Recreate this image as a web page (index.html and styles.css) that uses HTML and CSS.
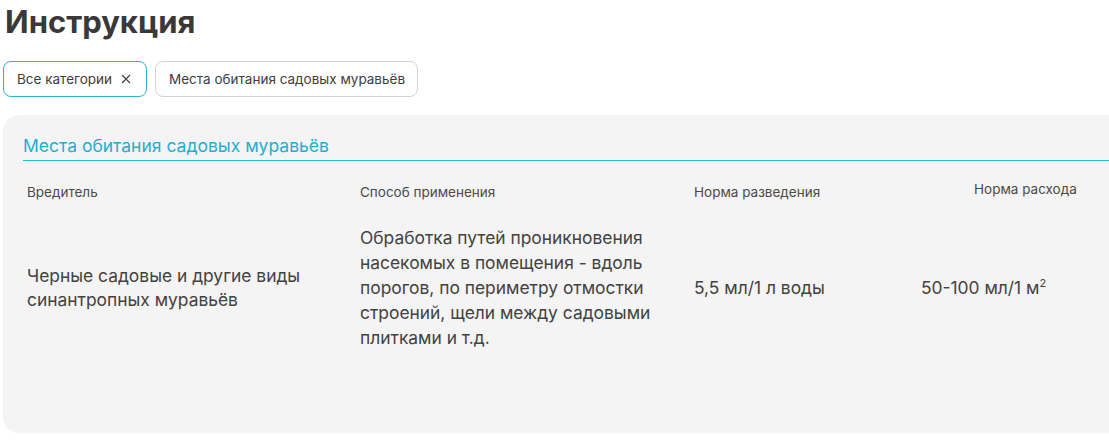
FILE: index.html
```html
<!DOCTYPE html>
<html lang="ru">
<head>
<meta charset="utf-8">
<link rel="stylesheet" href="styles.css">
</head>
<body>
<div class="page">
  <h1 class="title">Инструкция</h1>
  <div class="chips">
    <button class="chip chip-active">Все категории <svg class="x" width="10" height="10" viewBox="0 0 10 10"><path d="M1 1L9 9M9 1L1 9" stroke="#444" stroke-width="1.2" fill="none"/></svg></button>
    <button class="chip">Места обитания садовых муравьёв</button>
  </div>
  <section class="panel">
    <h2 class="panel-title">Места обитания садовых муравьёв</h2>
    <div class="table">
      <div class="th">Вредитель</div>
      <div class="th">Способ применения</div>
      <div class="th">Норма разведения</div>
      <div class="th th-last">Норма расхода</div>
      <div class="td">Черные садовые и другие виды синантропных муравьёв</div>
      <div class="td td-method">Обработка путей проникновения насекомых в помещения - вдоль порогов, по периметру отмостки строений, щели между садовыми плитками и т.д.</div>
      <div class="td">5,5 мл/1 л воды</div>
      <div class="td">50-100 мл/1 м<sup>2</sup></div>
    </div>
  </section>
</div>
</body>
</html>
```

FILE: styles.css
```css
html, body {
  margin: 0;
  padding: 0;
  background: #fff;
  overflow: hidden;
}
body {
  font-family: Inter, "Noto Sans", sans-serif;
  color: #3d3d3d;
}
.page {
  padding: 0 0 0 3px;
  width: 1130px;
}
.title {
  margin: 0;
  padding: 3px 0 0 2px;
  font-size: 31px;
  line-height: 38px;
  font-weight: 700;
  color: #3a3838;
  letter-spacing: 0;
}
.chips {
  display: flex;
  gap: 8px;
  margin-top: 20px;
}
.chip {
  display: flex;
  align-items: center;
  gap: 9px;
  height: 36px;
  padding: 0 12px 0 13px;
  border: 1px solid #d3d3d3;
  border-radius: 8px;
  background: #fff;
  font-family: inherit;
  font-size: 13.5px;
  color: #3d3d3d;
}
.chip-active {
  border-color: #2fb3c9;
  padding: 0 15px 0 13px;
}
.x { display: block; }
.panel {
  margin-top: 18px;
  background: #f4f4f4;
  border-radius: 16px;
  height: 318px;
  padding: 18px 0 0 20px;
  box-sizing: border-box;
}
.panel-title {
  margin: 0;
  font-size: 17.5px;
  line-height: 26px;
  font-weight: 400;
  color: #1eaed0;
  padding-bottom: 1px;
  border-bottom: 1px solid #2bbad3;
}
.table {
  display: grid;
  grid-template-columns: 333px 334px 227px 1fr;
  padding-left: 4px;
}
.th {
  font-size: 13.5px;
  color: #4a4a4a;
  padding-top: 22px;
  line-height: 18px;
}
.th-last {
  padding-top: 19px;
  padding-left: 53px;
}
.td {
  align-self: center;
  font-size: 17.4px;
  line-height: 24px;
  color: #424242;
  padding-top: 25px;
  padding-right: 20px;
}
.td-method {
  line-height: 25px;
  padding-top: 24px;
}
sup {
  font-size: 11px;
  line-height: 0;
  vertical-align: 7px;
}
```
